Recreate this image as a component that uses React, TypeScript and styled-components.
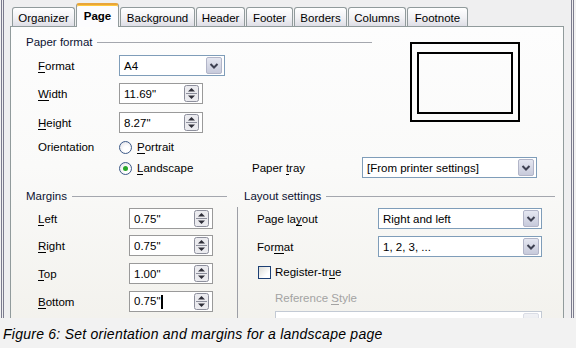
import styled, { createGlobalStyle } from 'styled-components';

const GlobalStyle = createGlobalStyle`
    html, body {
        margin: 0;
        padding: 0;
        background: #f2f2f2;
        overflow: hidden;
    }
    body {
        font-family: "Liberation Sans", Arial, sans-serif;
        font-size: 11.5px;
        color: #000;
    }
`;

const Dialog = styled.div`
    box-sizing: border-box;
    margin-left: 1px;
    width: 573px;
    height: 318px;
    overflow: hidden;
    border-left: 3px double #7c7c8e;
    border-right: 3px double #7c7c8e;
    background: #efeff0;
    padding: 0 7px 0 6px;
    display: flex;
    flex-direction: column;
`;

const TabBar = styled.div`
    display: flex;
    align-items: flex-end;
    height: 26px;
    padding-left: 2px;
    flex-shrink: 0;
`;

const Tab = styled.div<{ $active?: boolean; $width: number }>`
    box-sizing: border-box;
    width: ${({ $width }) => $width}px;
    margin-right: 1px;
    height: ${({ $active }) => ($active ? 24 : 19)}px;
    display: flex;
    align-items: center;
    justify-content: center;
    padding-top: ${({ $active }) => ($active ? 0 : 1)}px;
    border: 1px solid #919b9c;
    border-bottom: none;
    border-radius: 3px 3px 0 0;
    font-weight: ${({ $active }) => ($active ? 700 : 400)};
    position: relative;
    z-index: ${({ $active }) => ($active ? 1 : 0)};
    margin-bottom: ${({ $active }) => ($active ? -1 : 0)}px;
    background: ${({ $active }) =>
        $active ? '#fcfcfe' : 'linear-gradient(#ffffff, #f1f1f4 55%, #dedee6)'};
    ${({ $active }) =>
        $active &&
        `border-top: 2px solid #e8a53a;
         box-shadow: inset 0 1px 0 #ffc83c;`}
`;

const Panel = styled.div`
    flex: 1;
    min-height: 300px;
    border: 1px solid #919b9c;
    border-bottom: none;
    background: linear-gradient(180deg, #fdfdfd 0%, #fafaf9 45%, #f2f1ec 100%);
    padding: 8px 0 0 15px;
`;

const TopGrid = styled.div`
    display: grid;
    grid-template-columns: 93px 133px 110px 175px;
    grid-template-rows: 14px 27px 28px 29px 24px 21px;
    align-items: end;
`;

const Heading = styled.div<{ $width: number; $span?: string }>`
    display: flex;
    align-items: center;
    gap: 5px;
    height: 14px;
    width: ${({ $width }) => $width}px;
    grid-column: ${({ $span = '1 / -1' }) => $span};
    white-space: nowrap;
    color: #0c1232;

    &::after {
        content: '';
        flex: 1;
        height: 1px;
        background: #a4a7ae;
    }
`;

const Label = styled.div<{ $indent?: number; $disabled?: boolean; $height?: number; $wide?: boolean }>`
    height: ${({ $height = 21 }) => $height}px;
    display: flex;
    align-items: center;
    padding-left: ${({ $indent = 12 }) => $indent}px;
    white-space: nowrap;
    color: ${({ $disabled }) => ($disabled ? '#a3a3a3' : '#000')};
    ${({ $wide }) => $wide && 'grid-column: 1 / -1;'}

    u {
        text-decoration: none;
        border-bottom: 1px solid currentColor;
        line-height: 12px;
    }
`;

const Field = styled.div<{ $width: number; $disabled?: boolean }>`
    box-sizing: border-box;
    width: ${({ $width }) => $width}px;
    height: 21px;
    display: flex;
    align-items: center;
    justify-content: space-between;
    padding: 0 2px 0 4px;
    background: #fff;
    border: 1px solid ${({ $disabled }) => ($disabled ? '#c3cad4' : '#7f9db9')};
`;

const SpinField = styled(Field)`
    border-color: #9a9a9a;
    padding-right: 3px;
`;

const Caret = styled.span`
    display: inline-block;
    width: 2px;
    height: 14px;
    margin-left: 1px;
    background: #000;
    vertical-align: middle;
`;

const Preview = styled.div`
    box-sizing: border-box;
    grid-column: 3 / 5;
    grid-row: 1 / 5;
    align-self: start;
    justify-self: start;
    margin: 7px 0 0 158px;
    width: 110px;
    height: 80px;
    border: 2px solid #000;
    padding: 8px 5px 6px 5px;
    display: flex;
`;

const PreviewInner = styled.div`
    flex: 1;
    border: 2px solid #000;
`;

const RadioRow = styled.div<{ $col?: number }>`
    height: 20px;
    display: flex;
    align-items: center;
    gap: 5px;
    ${({ $col }) => $col && `grid-column: ${$col};`}

    u {
        text-decoration: none;
        border-bottom: 1px solid currentColor;
        line-height: 12px;
    }
`;

const RadioCircle = styled.span<{ $checked?: boolean }>`
    box-sizing: border-box;
    width: 13px;
    height: 13px;
    border-radius: 50%;
    border: 1px solid #3d5a88;
    background: radial-gradient(circle at 60% 65%, #ffffff 30%, #dcdce2 100%);
    display: flex;
    align-items: center;
    justify-content: center;

    &::after {
        content: '';
        display: ${({ $checked }) => ($checked ? 'block' : 'none')};
        width: 5px;
        height: 5px;
        border-radius: 50%;
        background: #27a627;
    }
`;

const BottomGrid = styled.div`
    display: grid;
    grid-template-columns: 205px 1px 311px;
    column-gap: 6px;
    margin-top: 11px;
`;

const Group = styled.div<{ $cols: string; $rows: string }>`
    display: grid;
    grid-template-columns: ${({ $cols }) => $cols};
    grid-template-rows: ${({ $rows }) => $rows};
    align-items: end;
`;

const VSeparator = styled.div`
    margin-top: 18px;
    background: #9d9fa6;
    height: 120px;
`;

const CheckRow = styled.div`
    grid-column: 1 / -1;
    display: flex;
    align-items: center;
    gap: 4px;
    padding-left: 14px;
    height: 14px;

    u {
        text-decoration: none;
        border-bottom: 1px solid currentColor;
        line-height: 12px;
    }
`;

const CheckBox = styled.span`
    box-sizing: border-box;
    width: 13px;
    height: 13px;
    border: 1px solid #1c3f74;
    background: linear-gradient(135deg, #dcdcd6, #ffffff 70%);
`;

const WideCell = styled.div`
    grid-column: 1 / -1;
    padding-left: 31px;
    margin-bottom: -3px;
`;

const Caption = styled.div`
    height: 30px;
    display: flex;
    align-items: center;
    padding-left: 3px;
    padding-top: 2px;
    box-sizing: border-box;
    font-family: "Liberation Sans", Arial, sans-serif;
    font-style: italic;
    font-size: 14px;
    letter-spacing: 0.25px;
    white-space: nowrap;
    color: #000;
    background: #f2f2f2;
`;

function DropButton({ disabled = false }: { disabled?: boolean }) {
    const id = disabled ? 'dbd' : 'dbn';
    return (
        <svg width="16" height="17" viewBox="0 0 16 17">
            <defs>
                <linearGradient id={id} x1="0" y1="0" x2="0" y2="1">
                    <stop offset="0" stopColor={disabled ? '#f1f2f5' : '#e6e8f2'} />
                    <stop offset="1" stopColor={disabled ? '#e2e4ea' : '#c6c9da'} />
                </linearGradient>
            </defs>
            <rect x="0.5" y="0.5" width="15" height="16" rx="1.5" fill={`url(#${id})`} stroke={disabled ? '#dadde5' : '#b2b5c8'} />
            <path d="M4.5 7 L8 10.5 L11.5 7" fill="none" stroke={disabled ? '#c9cbd3' : '#3e4152'} strokeWidth="2" />
        </svg>
    );
}

function SpinButton() {
    return (
        <svg width="15" height="17" viewBox="0 0 15 17">
            <rect x="0.5" y="0.5" width="14" height="16" rx="2" fill="#ebebef" stroke="#8d8f9c" />
            <line x1="2" y1="8.5" x2="13" y2="8.5" stroke="#8d8f9c" />
            <path d="M4 6.5 L7.5 3 L11 6.5 Z" fill="#2e2e38" />
            <path d="M4 10.5 L7.5 14 L11 10.5 Z" fill="#2e2e38" />
        </svg>
    );
}

function Dropdown({ width, value, disabled }: { width: number; value?: string; disabled?: boolean }) {
    return (
        <Field $width={width} $disabled={disabled}>
            <span>{value}</span>
            <DropButton disabled={disabled} />
        </Field>
    );
}

function Spin({ value, width, caret }: { value: string; width: number; caret?: boolean }) {
    return (
        <SpinField $width={width}>
            <span>
                {value}
                {caret && <Caret />}
            </span>
            <SpinButton />
        </SpinField>
    );
}

const tabs = [
    { name: 'Organizer', width: 63 },
    { name: 'Page', width: 43, active: true },
    { name: 'Background', width: 75 },
    { name: 'Header', width: 49 },
    { name: 'Footer', width: 47 },
    { name: 'Borders', width: 53 },
    { name: 'Columns', width: 58 },
    { name: 'Footnote', width: 61 },
];

export default function App() {
    return (
        <>
            <GlobalStyle />
            <Dialog>
                <TabBar>
                    {tabs.map((t) => (
                        <Tab key={t.name} $active={t.active} $width={t.width}>
                            {t.name}
                        </Tab>
                    ))}
                </TabBar>
                <Panel>
                    <TopGrid>
                        <Preview>
                            <PreviewInner />
                        </Preview>
                        <Heading $width={346} $span="1 / 3">Paper format</Heading>

                        <Label><span><u>F</u>ormat</span></Label>
                        <Dropdown width={106} value="A4" />

                        <Label><span><u>W</u>idth</span></Label>
                        <Spin width={84} value={'11.69"'} />

                        <Label><span><u>H</u>eight</span></Label>
                        <Spin width={84} value={'8.27"'} />

                        <Label $height={20}>Orientation</Label>
                        <RadioRow>
                            <RadioCircle />
                            <span><u>P</u>ortrait</span>
                        </RadioRow>

                        <RadioRow $col={2}>
                            <RadioCircle $checked />
                            <span><u>L</u>andscape</span>
                        </RadioRow>
                        <Label $indent={0}><span>Paper <u>t</u>ray</span></Label>
                        <Dropdown width={175} value="[From printer settings]" />
                    </TopGrid>

                    <BottomGrid>
                        <Group $cols="103px 84px" $rows="14px 26px 27px 28px 28px">
                            <Heading $width={201}>Margins</Heading>
                            <Label><span><u>L</u>eft</span></Label>
                            <Spin width={84} value={'0.75"'} />
                            <Label><span><u>R</u>ight</span></Label>
                            <Spin width={84} value={'0.75"'} />
                            <Label><span><u>T</u>op</span></Label>
                            <Spin width={84} value={'1.00"'} />
                            <Label><span><u>B</u>ottom</span></Label>
                            <Spin width={84} value={'0.75"'} caret />
                        </Group>

                        <VSeparator />

                        <Group $cols="134px 164px" $rows="14px 26px 28px 22px 26px 24px">
                            <Heading $width={311}>Layout settings</Heading>
                            <Label $indent={13}><span>Page la<u>y</u>out</span></Label>
                            <Dropdown width={164} value="Right and left" />
                            <Label $indent={13}><span>For<u>m</u>at</span></Label>
                            <Dropdown width={164} value="1, 2, 3, ..." />
                            <CheckRow>
                                <CheckBox />
                                <span>Register-tr<u>u</u>e</span>
                            </CheckRow>
                            <Label $indent={31} $disabled $wide $height={14}>
                                <span>Reference <u>S</u>tyle</span>
                            </Label>
                            <WideCell>
                                <Dropdown width={267} disabled />
                            </WideCell>
                        </Group>
                    </BottomGrid>
                </Panel>
            </Dialog>
            <Caption>Figure 6: Set orientation and margins for a landscape page</Caption>
        </>
    );
}
